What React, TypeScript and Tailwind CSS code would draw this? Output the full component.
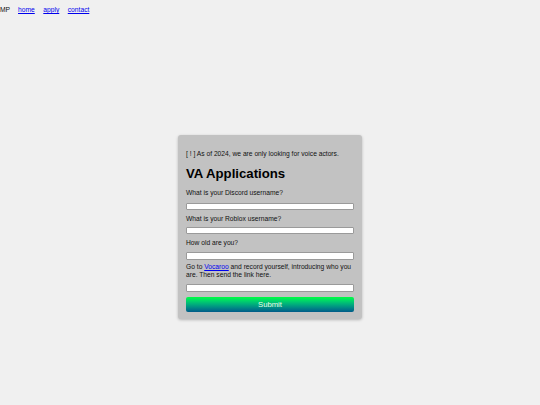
import React from 'react';

const FONT = { fontFamily: '"Liberation Sans", Arial, sans-serif' };

function Field({ label, top }: { label: React.ReactNode; top: string }) {
  return <p className={`${top} text-[6.7px] leading-[8px]`}>{label}</p>;
}

export default function App() {
  return (
    <div className="min-h-[405px] bg-[#f0f0f0] text-[#111]" style={FONT}>
      {/* nav */}
      <nav className="flex items-center gap-x-[8px] pt-[6px] text-[6.7px] leading-[8px]">
        <span>MP</span>
        <a href="#" className="text-[#0000ee] underline">home</a>
        <a href="#" className="ml-[0.5px] text-[#0000ee] underline">apply</a>
        <a href="#" className="ml-[0.5px] text-[#0000ee] underline">contact</a>
      </nav>

      <main className="flex justify-center pt-[121px]">
        <div className="w-[184px] rounded-[3px] bg-[#c2c2c2] px-[8px] pt-[15px] pb-[7px] shadow-[0_1px_3px_rgba(0,0,0,0.25)]">
          <p className="text-[6.7px] leading-[8px]">[ ! ] As of 2024, we are only looking for voice actors.</p>
          <h1 className="mt-[9.3px] text-[13.2px] leading-[14.7px] font-bold text-black">VA Applications</h1>

          <Field top="mt-[7px]" label="What is your Discord username?" />
          <input className="mt-[5.8px] block h-[7px] w-full rounded-[1px] border-[0.5px] border-[#9a9a9a] bg-white" />

          <Field top="mt-[5.2px]" label="What is your Roblox username?" />
          <input className="mt-[3.8px] block h-[7.7px] w-full rounded-[1px] border-[0.5px] border-[#9a9a9a] bg-white" />

          <Field top="mt-[4.8px]" label="How old are you?" />
          <input className="mt-[5.2px] block h-[7.3px] w-full rounded-[1px] border-[0.5px] border-[#9a9a9a] bg-white" />

          <p className="mt-[3.5px] text-[6.7px] leading-[8px]">
            Go to <a href="#" className="text-[#0000ee] underline">Vocaroo</a> and record yourself, introducing who you are. Then send the link here.
          </p>
          <input className="mt-[5.2px] block h-[7.6px] w-full rounded-[1px] border-[0.5px] border-[#9a9a9a] bg-white" />

          <button className="mt-[4.7px] flex h-[15.3px] w-full items-center justify-center rounded-[2px] bg-gradient-to-b from-[#00ff3c] to-[#005a88] text-[7.7px] leading-[9px] text-[#e8ffe8]">
            Submit
          </button>
        </div>
      </main>
    </div>
  );
}
